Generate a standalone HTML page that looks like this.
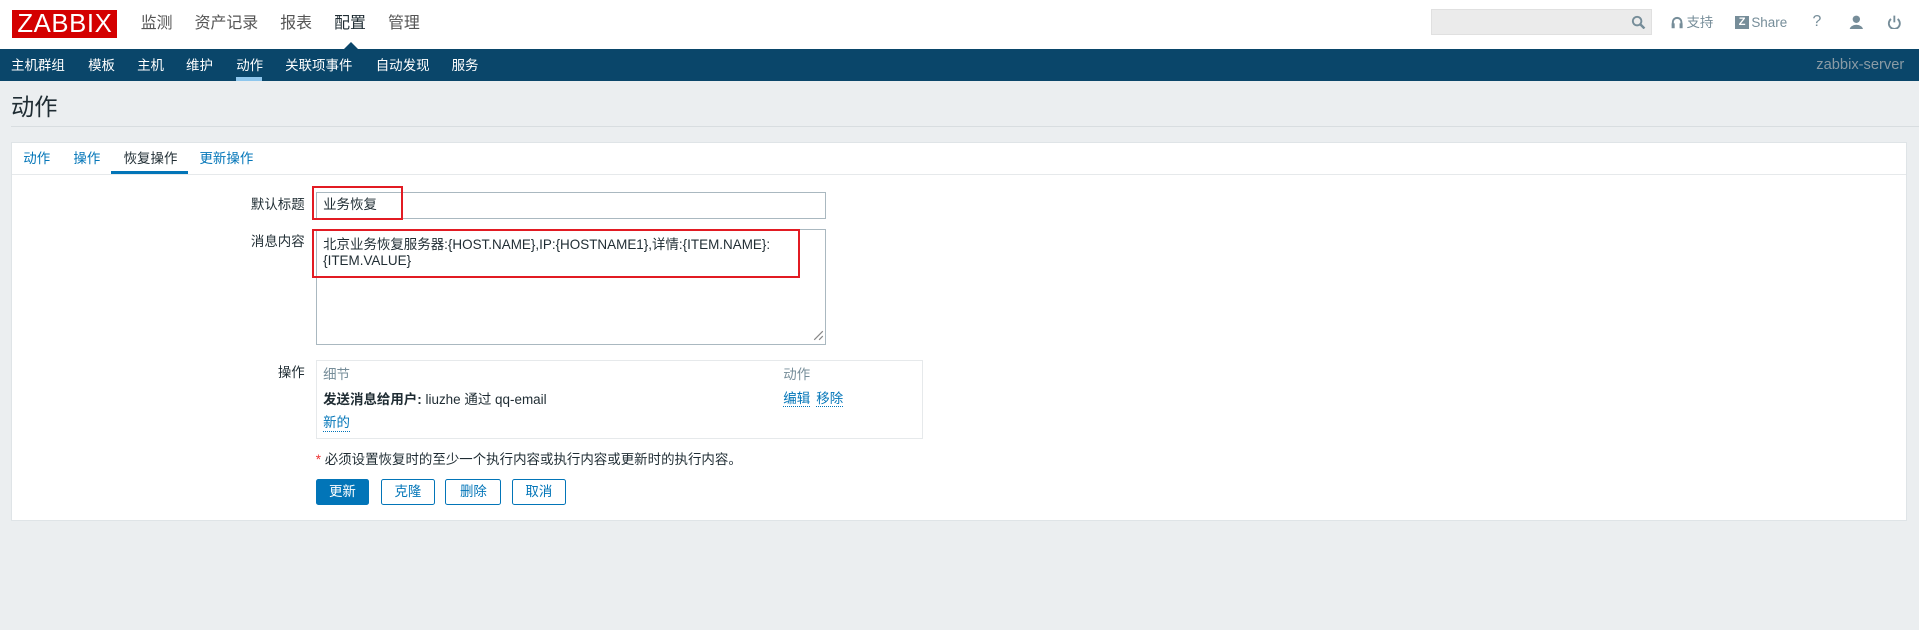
<!DOCTYPE html>
<html><head><meta charset="utf-8"><style>
html{zoom:1.22385}
body{margin:0;width:1568px;height:515px;overflow:hidden;background:#ebeef0;font-family:"Liberation Sans","Noto Sans CJK SC",sans-serif;font-size:11px;line-height:13px;color:#1f2c33;position:relative}
.a{position:absolute;white-space:nowrap}
#top{position:absolute;left:0;top:0;width:1568px;height:40px;background:#fff}
#nav{position:absolute;left:0;top:40px;width:1568px;height:26px;background:#0a466a}
.m{font-size:13px;line-height:15px;color:#555;top:12px}
.n{color:#fff;top:47px}
.lbl{color:#1f2c33;text-align:right;width:100px}
.btn{position:absolute;top:391px;height:20px;border:1px solid #0275b8;color:#0275b8;background:#fff;border-radius:2px;text-align:center;line-height:20px}
.lnk{color:#0275b8;border-bottom:1px dotted #0275b8;line-height:12px}
</style></head><body>
<div id="top"></div>
<div class="a" style="left:10px;top:8px;width:86px;height:23px;background:#d40000;color:#fff;font-size:21px;line-height:23px;text-align:center;letter-spacing:0.5px">ZABBIX</div>
<div class="a m" style="left:115px">监测</div>
<div class="a m" style="left:159px">资产记录</div>
<div class="a m" style="left:229px">报表</div>
<div class="a m" style="left:273px;color:#1f2c33">配置</div>
<div class="a m" style="left:317px">管理</div>
<div class="a" style="left:280px;top:34px;width:0;height:0;border-left:7px solid transparent;border-right:7px solid transparent;border-bottom:7px solid #0a466a"></div>
<div class="a" style="left:1169px;top:7px;width:181px;height:22px;background:#ebebeb;border:1px solid #e0e0e0;box-sizing:border-box"></div>
<svg class="a" style="left:1333px;top:12px" width="12" height="12" viewBox="0 0 12 12"><circle cx="5" cy="5" r="3.5" fill="none" stroke="#768d99" stroke-width="1.6"/><path d="M7.5 7.5L11 11" stroke="#768d99" stroke-width="2"/></svg>
<svg class="a" style="left:1365px;top:13px" width="10" height="11" viewBox="0 0 10 11"><path d="M1.5 8V5a3.5 3.5 0 0 1 7 0v3" fill="none" stroke="#768d99" stroke-width="1.6"/><rect x="0.5" y="6" width="2.5" height="4" fill="#768d99"/><rect x="7" y="6" width="2.5" height="4" fill="#768d99"/></svg>
<div class="a" style="left:1378px;top:12px;color:#768d99">支持</div>
<div class="a" style="left:1418px;top:13px;width:11px;height:11px;background:#768d99;color:#fff;font-size:9px;font-weight:bold;text-align:center;line-height:11px">Z</div>
<div class="a" style="left:1431px;top:12px;color:#768d99">Share</div>
<div class="a" style="left:1481px;top:11px;color:#768d99;font-size:13px;line-height:15px">?</div>
<svg class="a" style="left:1511px;top:12px" width="12" height="12" viewBox="0 0 12 12"><circle cx="6" cy="3.5" r="3" fill="#768d99"/><path d="M0.5 12a5.5 4 0 0 1 11 0z" fill="#768d99"/></svg>
<svg class="a" style="left:1542px;top:12px" width="12" height="12" viewBox="0 0 12 12"><path d="M3.3 3.3a4.5 4.5 0 1 0 5.4 0" fill="none" stroke="#768d99" stroke-width="1.5"/><path d="M6 0.5v5.5" stroke="#768d99" stroke-width="1.5"/></svg>
<div id="nav"></div>
<div class="a n" style="left:9px">主机群组</div>
<div class="a n" style="left:72px">模板</div>
<div class="a n" style="left:112px">主机</div>
<div class="a n" style="left:152px">维护</div>
<div class="a n" style="left:193px">动作</div>
<div class="a" style="left:193px;top:63px;width:21px;height:3px;background:#8fc7ed"></div>
<div class="a n" style="left:233px">关联项事件</div>
<div class="a n" style="left:307px">自动发现</div>
<div class="a n" style="left:369px">服务</div>
<div class="a" style="right:12px;top:47px;color:#8a9ba5;font-size:12px">zabbix-server</div>
<div class="a" style="left:9px;top:77px;font-size:19px;line-height:22px;color:#1f2c33">动作</div>
<div class="a" style="left:9px;top:103px;width:1559px;height:1px;background:#d8dde0"></div>
<div class="a" style="left:9px;top:116px;width:1549px;height:310px;background:#fff;border:1px solid #dfe4e7;box-sizing:border-box"></div>
<div class="a" style="left:10px;top:142px;width:1547px;height:1px;background:#e6e9eb"></div>
<div class="a" style="left:19px;top:123px;color:#0275b8">动作</div>
<div class="a" style="left:60px;top:123px;color:#0275b8">操作</div>
<div class="a" style="left:101px;top:123px;color:#1f2c33">恢复操作</div>
<div class="a" style="left:163px;top:123px;color:#0275b8">更新操作</div>
<div class="a" style="left:91px;top:140px;width:63px;height:2px;background:#0275b8"></div>
<div class="a lbl" style="left:149px;top:161px">默认标题</div>
<div class="a" style="left:258px;top:157px;width:417px;height:22px;border:1px solid #aab8c0;box-sizing:border-box"></div>
<div class="a" style="left:264px;top:161px">业务恢复</div>
<div class="a" style="left:255px;top:152px;width:74px;height:28px;border:2px solid #e21b23;box-sizing:border-box"></div>
<div class="a lbl" style="left:149px;top:191px">消息内容</div>
<div class="a" style="left:258px;top:187px;width:417px;height:95px;border:1px solid #aab8c0;box-sizing:border-box"></div>
<div class="a" style="left:264px;top:194px;line-height:13px">北京业务恢复服务器:{HOST.NAME},IP:{HOSTNAME1},详情:{ITEM.NAME}:<br>{ITEM.VALUE}</div>
<div class="a" style="left:255px;top:187px;width:399px;height:40px;border:2px solid #e21b23;box-sizing:border-box"></div>
<svg class="a" style="left:664px;top:270px" width="9" height="9"><path d="M1 8L8 1M5 8L8 5" stroke="#888" stroke-width="1"/></svg>
<div class="a lbl" style="left:149px;top:298px">操作</div>
<div class="a" style="left:258px;top:294px;width:496px;height:65px;border:1px solid #e6e9eb;box-sizing:border-box"></div>
<div class="a" style="left:264px;top:300px;color:#768d99">细节</div>
<div class="a" style="left:640px;top:300px;color:#768d99">动作</div>
<div class="a" style="left:264px;top:320px"><b>发送消息给用户:</b> liuzhe 通过 qq-email</div>
<div class="a lnk" style="left:640px;top:320px">编辑</div>
<div class="a lnk" style="left:667px;top:320px">移除</div>
<div class="a lnk" style="left:264px;top:340px">新的</div>
<div class="a" style="left:258px;top:369px"><span style="color:#e33">*</span> 必须设置恢复时的至少一个执行内容或执行内容或更新时的执行内容。</div>
<div class="btn" style="left:258px;width:42px;background:#0275b8;color:#fff">更新</div>
<div class="btn" style="left:311px;width:43px">克隆</div>
<div class="btn" style="left:364px;width:44px">删除</div>
<div class="btn" style="left:418px;width:43px">取消</div>
</body></html>
